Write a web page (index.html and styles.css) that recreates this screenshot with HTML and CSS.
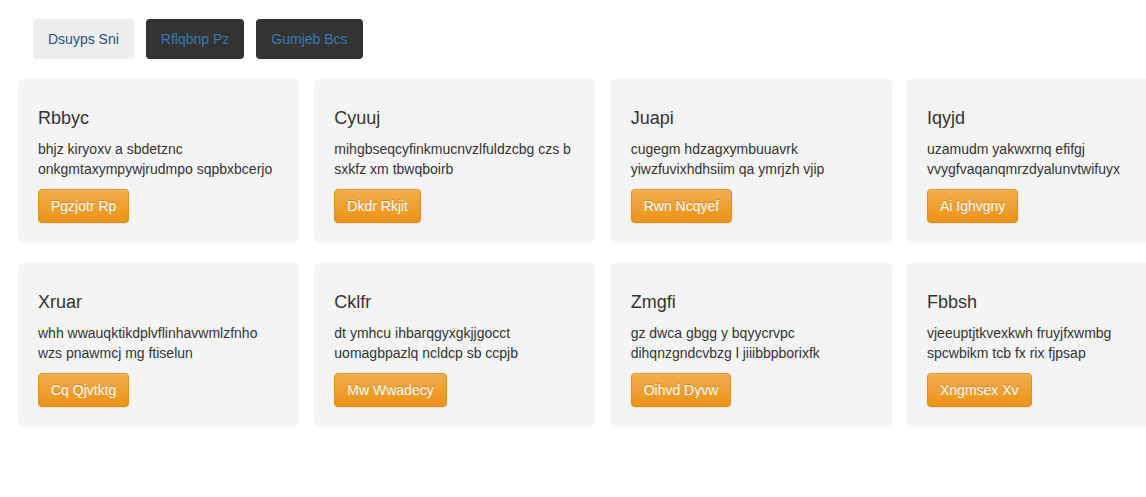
FILE: index.html
```html
<!DOCTYPE html>
<html>
<head>
<meta charset="utf-8">
<link rel="stylesheet" href="styles.css">
</head>
<body>
<div class="page">
  <ul class="tabs">
    <li class="tab tab-active">Dsuyps Sni</li>
    <li class="tab">Rflqbnp Pz</li>
    <li class="tab">Gumjeb Bcs</li>
  </ul>
  <div class="grid">
    <div class="card">
      <h4 class="card-title">Rbbyc</h4>
      <p class="card-text">bhjz kiryoxv a sbdetznc onkgmtaxympywjrudmpo sqpbxbcerjo</p>
      <button class="btn">Pgzjotr Rp</button>
    </div>
    <div class="card">
      <h4 class="card-title">Cyuuj</h4>
      <p class="card-text">mihgbseqcyfinkmucnvzlfuldzcbg czs b sxkfz xm tbwqboirb</p>
      <button class="btn">Dkdr Rkjit</button>
    </div>
    <div class="card">
      <h4 class="card-title">Juapi</h4>
      <p class="card-text">cugegm hdzagxymbuuavrk yiwzfuvixhdhsiim qa ymrjzh vjip</p>
      <button class="btn">Rwn Ncqyef</button>
    </div>
    <div class="card">
      <h4 class="card-title">Iqyjd</h4>
      <p class="card-text">uzamudm yakwxrnq efifgj vvygfvaqanqmrzdyalunvtwifuyx</p>
      <button class="btn">Ai Ighvgny</button>
    </div>
    <div class="card">
      <h4 class="card-title">Xruar</h4>
      <p class="card-text">whh wwauqktikdplvflinhavwmlzfnho wzs pnawmcj mg ftiselun</p>
      <button class="btn">Cq Qjvtktg</button>
    </div>
    <div class="card">
      <h4 class="card-title">Cklfr</h4>
      <p class="card-text">dt ymhcu ihbarqgyxgkjjgocct uomagbpazlq ncldcp sb ccpjb</p>
      <button class="btn">Mw Wwadecy</button>
    </div>
    <div class="card">
      <h4 class="card-title">Zmgfi</h4>
      <p class="card-text">gz dwca gbgg y bqyycrvpc dihqnzgndcvbzg l jiiibbpborixfk</p>
      <button class="btn">Oihvd Dyvw</button>
    </div>
    <div class="card">
      <h4 class="card-title">Fbbsh</h4>
      <p class="card-text">vjeeuptjtkvexkwh fruyjfxwmbg spcwbikm tcb fx rix fjpsap</p>
      <button class="btn">Xngmsex Xv</button>
    </div>
  </div>
</div>
</body>
</html>
```

FILE: styles.css
```css
html, body {
  margin: 0;
  padding: 0;
  background: #fff;
  overflow: hidden;
}
body {
  font-family: "Liberation Sans", Arial, sans-serif;
  font-size: 14px;
  line-height: 20px;
  color: #333;
}
.page {
  padding: 19px 0 0 18px;
}
.tabs {
  list-style: none;
  margin: 0 0 0 15px;
  padding: 0;
  display: flex;
  gap: 12px;
}
.tab {
  padding: 10px 15px;
  line-height: 20px;
  border-radius: 4px;
  background: #333;
  color: #337ab7;
}
.tab-active {
  background: #eee;
  color: #23527c;
}
.grid {
  margin-top: 20px;
  display: grid;
  grid-template-columns: repeat(4, 281px);
  column-gap: 15.33px;
  row-gap: 20px;
  width: 1200px;
}
.card {
  background: #f4f4f4;
  border-radius: 6px;
  padding: 20px;
}
.card-title {
  margin: 10px 0 10px;
  font-size: 18px;
  font-weight: 500;
  line-height: 19.8px;
  color: #333;
}
.card-text {
  margin: 0 0 10px;
}
.btn {
  display: inline-block;
  font-family: inherit;
  font-size: 14px;
  line-height: 20px;
  padding: 6px 12px;
  color: #fff;
  border: 1px solid #e38d13;
  border-radius: 4px;
  background-color: #f0ad4e;
  background-image: linear-gradient(to bottom, #f0ad4e 0, #eb9316 100%);
  text-shadow: 0 -1px 0 rgba(0, 0, 0, 0.2);
  box-shadow: inset 0 1px 0 rgba(255, 255, 255, 0.15), 0 1px 1px rgba(0, 0, 0, 0.075);
  cursor: pointer;
}
```
